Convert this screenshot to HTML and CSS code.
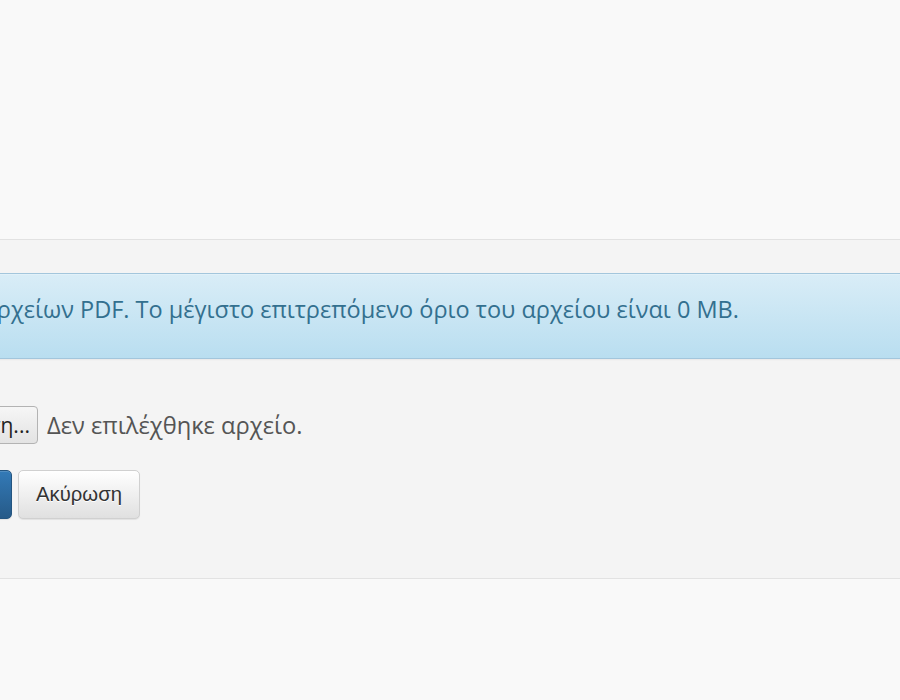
FILE: index.html
```html
<!DOCTYPE html>
<html lang="el">
<head>
<meta charset="utf-8">
<title>Αποστολή αρχείου</title>
<link rel="stylesheet" href="styles.css">
</head>
<body>
<div class="top"></div>
<section class="panel">
  <div class="inner">
    <div class="alert alert-info">
      <p>Επιτρέπεται μόνο η αποστολή αρχείων PDF. Το μέγιστο επιτρεπόμενο όριο του αρχείου είναι 0 MB.</p>
    </div>
    <div class="file-row">
      <span class="file-btn">Περιήγηση...</span>
      <span class="file-name">Δεν επιλέχθηκε αρχείο.</span>
    </div>
    <div class="actions">
      <button class="btn btn-primary" type="button">Αποστολή</button>
      <button class="btn btn-default" type="button">Ακύρωση</button>
    </div>
  </div>
</section>
<div class="bottom"></div>
</body>
</html>
```
FILE: styles.css
```css
html, body {
  margin: 0;
  padding: 0;
}
body {
  background: #f9f9f9;
  font-family: "Open Sans", "DejaVu Sans", sans-serif;
  color: #333;
  overflow: hidden;
  width: 900px;
  height: 700px;
}
.top {
  height: 239px;
}
.panel {
  background: #f4f4f4;
  border-top: 1px solid #e2e2e2;
  border-bottom: 1px solid #e2e2e2;
  padding: 33px 0 59px;
}
.inner {
  margin-left: -375.5px;
  width: 1500px;
}
.alert {
  border: 1px solid #a3c6dc;
  border-radius: 5px;
  background-image: linear-gradient(to bottom, #d9edf7 0, #b9def0 100%);
  box-shadow: inset 0 1px 0 rgba(255,255,255,.25), 0 1px 2px rgba(0,0,0,.05);
  color: #33708f;
  padding: 19px 21px 21px 19.5px;
  margin-bottom: 46.6px;
  font-size: 23.5px;
  line-height: 32.7px;
}
.alert p {
  margin: 0 0 11.7px;
}
.file-row {
  display: flex;
  align-items: center;
  gap: 9px;
  padding-left: 273.5px;
  height: 38px;
}
.file-btn {
  box-sizing: border-box;
  width: 140px;
  height: 38px;
  display: flex;
  align-items: center;
  justify-content: center;
  border: 1px solid #b3b3b3;
  border-radius: 4px;
  background: linear-gradient(to bottom, #f6f6f6, #e3e3e3);
  color: #222;
  font-size: 21px;
}
.file-name {
  font-size: 23.7px;
  color: #555;
}
.actions {
  margin-top: 26px;
  padding-left: 245.5px;
  display: flex;
  gap: 6px;
}
.btn {
  box-sizing: border-box;
  height: 49px;
  padding: 0 17px;
  border-radius: 5px;
  font-family: "Liberation Sans", Arial, sans-serif;
  font-size: 20.3px;
  line-height: 47px;
  border: 1px solid #ccc;
}
.btn-primary {
  width: 142px;
  color: #fff;
  background-image: linear-gradient(to bottom, #337ab7 0, #265a88 100%);
  border-color: #245580;
  text-shadow: 0 -1px 0 rgba(0,0,0,.2);
  box-shadow: inset 0 1px 0 rgba(255,255,255,.15), 0 1px 1px rgba(0,0,0,.075);
}
.btn-default {
  color: #333;
  background-image: linear-gradient(to bottom, #fff 0, #e0e0e0 100%);
  border-color: #d0d0d0;
  text-shadow: 0 1px 0 #fff;
  box-shadow: inset 0 1px 0 rgba(255,255,255,.15), 0 1px 1px rgba(0,0,0,.075);
}
.bottom {
  height: 121px;
}
```
